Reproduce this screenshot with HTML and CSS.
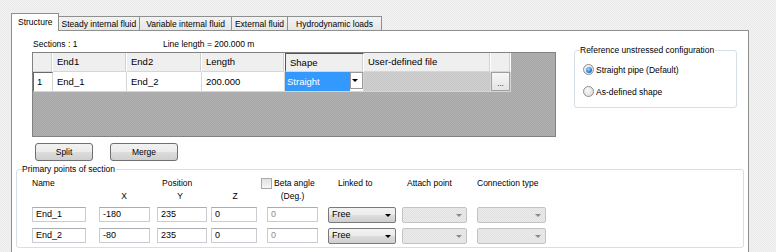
FILE: index.html
```html
<!DOCTYPE html>
<html lang="en">
<head>
    <meta charset="UTF-8">
    <title>Line sections</title>
    <link rel="stylesheet" href="styles.css">
</head>
<body>
<div class="window">
    <div class="tabs">
        <div class="tab active">Structure</div>
        <div class="tab">Steady internal fluid</div>
        <div class="tab wide">Variable internal fluid</div>
        <div class="tab">External fluid</div>
        <div class="tab wide last">Hydrodynamic loads</div>
    </div>
    <div class="panel">
        <div class="upper">
            <div class="sections">
                <div class="info"><span class="count">Sections : 1</span><span>Line length = 200.000 m</span></div>
                <div class="grid">
                    <div class="row head">
                        <div class="c c0"></div>
                        <div class="c c1">End1</div>
                        <div class="c c2">End2</div>
                        <div class="c c3">Length</div>
                        <div class="c c4 current">Shape</div>
                        <div class="c c5">User-defined file</div>
                        <div class="c c6"></div>
                    </div>
                    <div class="row data">
                        <div class="c c0 rowhead">1</div>
                        <div class="c c1">End_1</div>
                        <div class="c c2">End_2</div>
                        <div class="c c3">200.000</div>
                        <div class="c c4 combo"><span class="sel">Straight</span><span class="drop"></span></div>
                        <div class="c c5 disabled"></div>
                        <div class="c c6"><span class="dots">...</span></div>
                    </div>
                </div>
                <div class="btns">
                    <button class="btn split">Split</button>
                    <button class="btn merge">Merge</button>
                </div>
            </div>
            <fieldset class="group ref">
                <legend>Reference unstressed configuration</legend>
                <div class="radio on"><span class="dot"></span>Straight pipe (Default)</div>
                <div class="radio"><span class="dot"></span>As-defined shape</div>
            </fieldset>
        </div>
        <fieldset class="group points">
            <legend>Primary points of section</legend>
            <div class="ptable">
                <div class="h name">Name</div>
                <div class="h position">Position</div>
                <div class="h beta"><span class="check"></span>Beta angle</div>
                <div class="h linked">Linked to</div>
                <div class="h attach">Attach point</div>
                <div class="h conn">Connection type</div>

                <div class="h"></div>
                <div class="h axis">X</div>
                <div class="h axis">Y</div>
                <div class="h axis">Z</div>
                <div class="h deg">(Deg.)</div>
                <div class="h"></div>
                <div class="h"></div>
                <div class="h"></div>

                <div><span class="edit w54">End_1</span></div>
                <div><span class="edit w51">-180</span></div>
                <div><span class="edit w50">235</span></div>
                <div><span class="edit w46">0</span></div>
                <div><span class="edit w51 off">0</span></div>
                <div><span class="select w68">Free</span></div>
                <div><span class="select w65 off"></span></div>
                <div><span class="select w69 off"></span></div>

                <div><span class="edit w54">End_2</span></div>
                <div><span class="edit w51">-80</span></div>
                <div><span class="edit w50">235</span></div>
                <div><span class="edit w46">0</span></div>
                <div><span class="edit w51 off">0</span></div>
                <div><span class="select w68">Free</span></div>
                <div><span class="select w65 off"></span></div>
                <div><span class="select w69 off"></span></div>
            </div>
        </fieldset>
    </div>
</div>
</body>
</html>
```

FILE: styles.css
```css
*{
    margin: 0;
    padding: 0;
    box-sizing: border-box;
}
body{
    background: repeating-conic-gradient(#f3f3f3 0 25%, #e9e9e9 0 50%) 0 0/2px 2px;
    font-family: "Liberation Sans", Arial, sans-serif;
    font-size: 8.5px;
    color: #000;
    height: 252px;
    overflow: hidden;
}
.window{
    padding: 13px 0 0 11px;
}

/* tabs */
.tabs{
    display: flex;
    align-items: flex-end;
    height: 17px;
}
.tab{
    height: 14px;
    line-height: 14px;
    padding: 0 3px;
    border: 1px solid #8e8f8f;
    border-bottom: none;
    margin-left: -1px;
    background: linear-gradient(#f3f3f3, #e6e6e6);
    white-space: nowrap;
}
.tab.wide{
    padding: 0 6px;
}
.tab.last{
    padding: 0 8px;
}
.tab.active{
    height: 18px;
    line-height: 17px;
    padding: 0 5px 0 6px;
    margin-left: 0;
    margin-bottom: -1px;
    background: #fff;
    position: relative;
    z-index: 1;
}

/* panel */
.panel{
    width: 738px;
    height: 240px;
    background: #fff;
    border: 1px solid #8e8f8f;
}
.upper{
    display: flex;
}
.sections{
    padding-left: 20px;
}
.info{
    height: 12px;
    line-height: 12px;
    margin: 7px 0 2px;
    padding-left: 1px;
}
.info .count{
    display: inline-block;
    width: 130px;
}

/* grid */
.grid{
    width: 524px;
    height: 85px;
    border: 1px solid #828282;
    background: repeating-conic-gradient(#a7a7a7 0 25%, #b1b1b1 0 50%) 0 0/2px 2px;
    font-size: 9.5px;
}
.row{
    display: flex;
}
.row.head{
    height: 19px;
}
.row.data{
    height: 20px;
}
.c{
    line-height: 18px;
    padding-left: 4px;
    border-right: 1px solid #d6d6d6;
    border-bottom: 1px solid #d6d6d6;
    white-space: nowrap;
}
.head .c{
    background: #efefef;
    border-right-color: #fff;
    box-shadow: inset -1px 0 #d2d2d2;
}
.data .c{
    background: #fff;
    line-height: 19px;
}
.c0{ width: 20px; }
.c1{ width: 74px; }
.c2{ width: 75px; }
.c3{ width: 83px; }
.c4{ width: 79px; }
.c5{ width: 127px; }
.c6{ width: 20px; }
.head .current{
    border-top: 1px solid #555;
    border-left: 1px solid #555;
    line-height: 17px;
}
.data .rowhead{
    padding-left: 3px;
    border-left: 1px solid #6b6b6b;
    border-top: 1px solid #6b6b6b;
    line-height: 18px;
}
.data .combo{
    display: flex;
    padding: 0;
}
.combo .sel{
    width: 65px;
    background: #3399ff;
    color: #fff;
    padding-left: 2px;
}
.combo .drop{
    width: 13px;
    height: 17px;
    border: 1px solid #9a9a9a;
    background: #fff;
    position: relative;
}
.drop::after,.select::after{
    content: "";
    position: absolute;
    right: 4px;
    top: 6px;
    border-left: 3px solid transparent;
    border-right: 3px solid transparent;
    border-top: 3px solid #000;
}
.data .disabled{
    background: repeating-conic-gradient(#d0d0d0 0 25%, #c6c6c6 0 50%) 0 0/2px 2px;
}
.data .c6{
    padding: 0;
    background: #fff;
}
.dots{
    display: block;
    height: 19px;
    line-height: 22px;
    text-align: center;
    font-size: 8px;
    border: 1px solid #a0a0a0;
    background: linear-gradient(#f6f6f6, #e4e4e4);
}

/* buttons */
.btns{
    display: flex;
    gap: 17px;
    margin: 6px 0 0 3px;
}
.btn{
    height: 18px;
    font: inherit;
    border: 1px solid #707070;
    border-radius: 3px;
    background: linear-gradient(#f2f2f2 0, #ebebeb 50%, #dddddd 50%, #cfcfcf 100%);
}
.split{ width: 58px; }
.merge{ width: 68px; }

/* group boxes */
.group{
    border: 1px solid #d5dfe5;
    border-radius: 3px;
    padding: 0 0 0 5px;
}
.group legend{
    line-height: 12px;
    padding: 0 1px 0 0;
}
.ref{
    width: 163px;
    height: 64px;
    margin: 13px 0 0 18px;
}
.radio{
    display: flex;
    align-items: center;
    gap: 2px;
    height: 11px;
    margin: 8px 0 0 3px;
}
.radio + .radio{
    margin-top: 11px;
}
.dot{
    width: 11px;
    height: 11px;
    border-radius: 50%;
    border: 1px solid #8f8f8f;
    background: radial-gradient(circle at 40% 35%, #fafafa, #d6d6d6);
    display: flex;
    align-items: center;
    justify-content: center;
}
.radio.on .dot::after{
    content: "";
    width: 6px;
    height: 6px;
    border-radius: 50%;
    background: radial-gradient(circle at 40% 35%, #9fd8ff, #1c6fd1 70%, #0d3f87);
}

.points{
    width: 728px;
    height: 85px;
    margin: 2px 0 0 4px;
}
.ptable{
    display: grid;
    grid-template-columns: 67px 58px 54px 56px 61px 74px 75px 69px;
    grid-template-rows: 13px 17px 21px 16px;
    margin-left: 10px;
    margin-top: 2px;
}
.h{
    line-height: 12px;
    text-align: left;
    white-space: nowrap;
}
.h.position{
    grid-column: span 3;
    padding-left: 63px;
}
.h.axis{
    text-align: center;
    padding-right: 8px;
}
.h.deg{
    text-align: center;
    padding-right: 10px;
}
.h.linked{ padding-left: 10px; }
.h.attach{ padding-left: 5px; }
.h.beta{
    display: flex;
    gap: 2px;
    margin-left: -6px;
    padding-top: 2px;
    line-height: 9px;
}
.check{
    width: 11px;
    height: 11px;
    margin-top: -1px;
    border: 1px solid #a9a9a9;
    background: linear-gradient(#e2e2e2, #f6f6f6);
}
.edit,.select{
    display: block;
    height: 15px;
    line-height: 13px;
    padding-left: 3px;
    border: 1px solid #c9ccd2;
    border-top-color: #a9acb2;
    font-size: 9px;
}
.edit.off{
    color: #8d8d8d;
}
.select{
    height: 16px;
    position: relative;
    border: 1px solid #7a7a7a;
    border-radius: 2px;
    background: linear-gradient(#f2f2f2 0, #ebebeb 50%, #dddddd 50%, #cfcfcf 100%);
}
.select.off{
    border-color: #c3c3c3;
    background: repeating-conic-gradient(#ececec 0 25%, #e0e0e0 0 50%) 0 0/2px 2px;
}
.select.off::after{
    border-top-color: #8a8a8a;
}
.w54{ width: 54px; }
.w51{ width: 51px; }
.w50{ width: 50px; }
.w46{ width: 46px; }
.w68{ width: 68px; }
.w65{ width: 65px; }
.w69{ width: 69px; }
```
